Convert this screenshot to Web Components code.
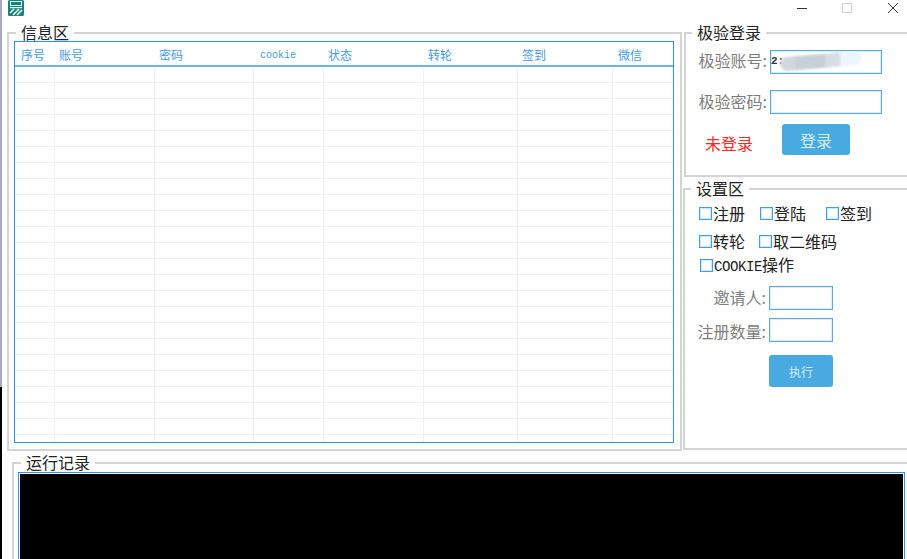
<!DOCTYPE html>
<html>
<head>
<meta charset="utf-8">
<title>信息区</title>
<style>
  html, body { margin: 0; height: 100%; background: #fff; overflow: hidden; }
  body { font-family: "Noto Sans CJK SC", "Liberation Sans", sans-serif; }
</style>
</head>
<body>
<app-window></app-window>

<template id="group-tpl">
  <style>
    :host { display: block; box-sizing: border-box; }
    fieldset { box-sizing: border-box; height: 100%; margin: 0; padding: 0; border: 2px solid #d4d4d4; min-width: 0; }
    legend { margin-left: var(--legend-left, 8px); padding: 0 5px 2px; font-size: 16px; line-height: 16px; color: #222; }
  </style>
  <fieldset><legend><slot name="title"></slot></legend><slot></slot></fieldset>
</template>

<script>
const MONO = '"Liberation Mono", "Noto Sans CJK SC", monospace';

class GroupBox extends HTMLElement {
  connectedCallback() {
    const root = this.attachShadow({ mode: 'open' });
    root.appendChild(document.getElementById('group-tpl').content.cloneNode(true));
  }
}

class TitleBar extends HTMLElement {
  connectedCallback() {
    this.attachShadow({ mode: 'open' }).innerHTML = `
      <style>
        :host { display: flex; height: 20px; align-items: flex-start; padding-left: 6px; }
        .logo { width: 16px; height: 16px; flex: none; }
        .btns { margin-left: auto; margin-right: -9px; display: flex; }
        .btn { height: 16px; display: flex; align-items: center; justify-content: center; }
        svg { display: block; }
      </style>
      <svg class="logo" viewBox="0 0 16 16">
        <rect width="16" height="16" rx="1.5" fill="#13857c"/>
        <rect x="2.5" y="1.5" width="11" height="4" fill="none" stroke="#dff2ef"/>
        <rect x="2" y="7" width="12" height="1.2" fill="#fff"/>
        <path d="M2 13 L6 9 M5 15 L11 9 M9 15 L14 10" stroke="#fff" stroke-width="1.5" fill="none"/>
      </svg>
      <div class="btns">
        <div class="btn" style="width:44px"><svg width="12" height="12"><path d="M1 6.5H11" stroke="#333"/></svg></div>
        <div class="btn" style="width:46px"><svg width="12" height="12"><rect x="1.5" y="1.5" width="9" height="9" fill="none" stroke="#d0d0d0"/></svg></div>
        <div class="btn" style="width:46px"><svg width="12" height="12"><path d="M1 1L11 11M11 1L1 11" stroke="#333" fill="none"/></svg></div>
      </div>`;
  }
}

class DataGrid extends HTMLElement {
  connectedCallback() {
    // label, column width, left padding of the heading
    const cols = [
      ['序号', 40, 6], ['账号', 100, 4], ['密码', 99, 4], ['cookie', 70, 6],
      ['状态', 100, 4], ['转轮', 94, 4], ['签到', 95, 4], ['微信', 60, 5]
    ];
    const tpl = cols.map(c => c[1] + 'px').join(' ');
    const head = cols.map(c => `<div class="${c[0] === 'cookie' ? 'mono' : ''}" style="padding-left:${c[2]}px">${c[0]}</div>`).join('');
    const row = cols.map(() => '<i></i>').join('');
    this.attachShadow({ mode: 'open' }).innerHTML = `
      <style>
        :host { display: block; box-sizing: border-box; border: 1px solid #2a93ea; margin: -1px 6px 0 5px; height: 402px; overflow: hidden; }
        .head, .row { display: grid; grid-template-columns: ${tpl}; width: 658px; }
        .head { box-sizing: border-box; height: 25px; border-bottom: 2px solid #74b3ea; color: #3f9be6; font-size: 12px; }
        .head div { white-space: nowrap; line-height: 25px; }
        .head div.mono { font-family: ${MONO}; font-size: 10px; line-height: 27px; }
        .rows { height: 375px; overflow: hidden; }
        .row { height: 16px; box-sizing: border-box; border-bottom: 1px solid #f1f1f1; }
        .row i { border-right: 1px solid #f1f1f1; }
        .row i:last-child { border-right: 0; }
      </style>
      <div class="head">${head}</div>
      <div class="rows">${Array(24).fill(`<div class="row">${row}</div>`).join('')}</div>`;
  }
}

class TextField extends HTMLElement {
  connectedCallback() {
    this.attachShadow({ mode: 'open' }).innerHTML = `
      <style>
        :host { display: flex; align-items: center; font-size: 16px; color: #7d7d7d; }
        .label { box-sizing: border-box; width: var(--label-w, 73px); padding-right: 3px; text-align: right; white-space: nowrap; line-height: 20px; margin-top: var(--label-shift, -3px); }
        .box { box-sizing: border-box; position: relative; overflow: hidden; width: var(--box-w, 112px); height: 24px; border: 1px solid #5aa7e4; box-shadow: inset 0 0 0 1px rgba(120,190,240,.25); background: #fff; }
        .val { position: absolute; left: 0; top: 4px; font: bold 11px ${MONO}; color: #333; }
        .blur { position: absolute; left: 9px; top: 3px; height: 14px; width: 82px; border-radius: 7px; transform: rotate(-5deg); filter: blur(1px);
          background: linear-gradient(90deg, #d2d7dc 0 18%, #c8d0d7 18% 55%, #d6dde5 55% 73%, #ecf4fc 73% 100%); }
      </style>
      <span class="label">${this.getAttribute('label')}</span>
      <div class="box">${this.hasAttribute('value') ? `<span class="val">${this.getAttribute('value')}</span><span class="blur"></span>` : ''}</div>`;
  }
}

class FlatButton extends HTMLElement {
  connectedCallback() {
    this.attachShadow({ mode: 'open' }).innerHTML = `
      <style>
        :host { display: flex; align-items: center; justify-content: center; box-sizing: border-box; background: #49aae2; color: #d6ecf9; border-radius: 3px; }
      </style>
      <slot></slot>`;
  }
}

class CheckItem extends HTMLElement {
  connectedCallback() {
    this.attachShadow({ mode: 'open' }).innerHTML = `
      <style>
        :host { display: inline-flex; align-items: center; font-size: 16px; color: #222; white-space: nowrap; line-height: 20px; }
        .box { box-sizing: border-box; width: 13px; height: 13px; border: 1px solid #3d9eea; box-shadow: inset 0 0 0 1px rgba(120,190,240,.35); margin-right: 1px; flex: none; background: #fff; }
      </style>
      <span class="box"></span><slot></slot>`;
  }
}

class LoginPanel extends HTMLElement {
  connectedCallback() {
    this.attachShadow({ mode: 'open' }).innerHTML = `
      <style>
        :host { display: block; }
        group-box { height: 153px; --legend-left: 6px; }
        .body { padding-top: 8px; display: flex; flex-direction: column; }
        text-field { --label-w: 84px; --box-w: 112px; --label-shift: -5px; }
        text-field + text-field { margin-top: 16px; --label-shift: -3px; }
        .foot { display: flex; align-items: flex-start; margin-top: 10px; }
        .status { margin: 8px 0 0 19px; width: 77px; color: #fb2a2a; font-size: 16px; line-height: 22px; }
        flat-button { width: 68px; height: 31px; font-size: 16px; }
      </style>
      <group-box>
        <span slot="title">极验登录</span>
        <div class="body">
          <text-field label="极验账号:" value="2:"></text-field>
          <text-field label="极验密码:"></text-field>
          <div class="foot"><span class="status">未登录</span><flat-button>登录</flat-button></div>
        </div>
      </group-box>`;
  }
}

class SettingsPanel extends HTMLElement {
  connectedCallback() {
    this.attachShadow({ mode: 'open' }).innerHTML = `
      <style>
        :host { display: block; margin-left: -1px; }
        group-box { height: 270px; --legend-left: 6px; }
        .body { padding: 5px 0 0 14px; }
        .line { display: flex; height: 20px; }
        .line.second { margin-top: 8px; }
        .line.third { margin-top: 4px; padding-left: 1px; }
        .mono { font-family: ${MONO}; font-size: 14px; letter-spacing: -.4px; }
        text-field { --box-w: 64px; --label-w: 72px; margin: 11px 0 0 -2px; }
        text-field + text-field { margin-top: 8px; --label-shift: 1px; }
        .run { width: 64px; height: 32px; margin: 13px 0 0 70px; font-size: 12px; }
      </style>
      <group-box>
        <span slot="title">设置区</span>
        <div class="body">
          <div class="line"><check-item style="width:61px">注册</check-item><check-item style="width:66px">登陆</check-item><check-item>签到</check-item></div>
          <div class="line second"><check-item style="width:60px">转轮</check-item><check-item>取二维码</check-item></div>
          <div class="line third"><check-item><span><span class="mono">COOKIE</span>操作</span></check-item></div>
          <text-field label="邀请人:"></text-field>
          <text-field label="注册数量:"></text-field>
          <flat-button class="run">执行</flat-button>
        </div>
      </group-box>`;
  }
}

class AppWindow extends HTMLElement {
  connectedCallback() {
    this.attachShadow({ mode: 'open' }).innerHTML = `
      <style>
        :host { display: block; height: 559px; overflow: hidden; box-sizing: border-box; padding-left: 2px;
          background: linear-gradient(#a9a9c4 0 387px, #000 387px) left top / 2px 100% no-repeat, #fff; }
        .top { display: grid; grid-template-columns: 675px 1fr; column-gap: 2px; padding: 4px 0 0 5px; }
        .info { height: 427px; --legend-left: 7px; }
        .side { display: flex; flex-direction: column; gap: 3px; margin-right: -40px; min-width: 0; }
        .log { margin: 3px -30px 0 10px; height: 140px; --legend-left: 7px; }
        .term { box-sizing: border-box; height: 120px; margin-left: 4px; width: 887px; border: 1px solid #2a93ea; padding: 1px; background: #fff; }
        .term div { background: #000; height: 100%; }
      </style>
      <title-bar></title-bar>
      <div class="top">
        <group-box class="info"><span slot="title">信息区</span><data-grid></data-grid></group-box>
        <div class="side"><login-panel></login-panel><settings-panel></settings-panel></div>
      </div>
      <group-box class="log"><span slot="title">运行记录</span><div class="term"><div></div></div></group-box>`;
  }
}

customElements.define('group-box', GroupBox);
customElements.define('title-bar', TitleBar);
customElements.define('data-grid', DataGrid);
customElements.define('text-field', TextField);
customElements.define('flat-button', FlatButton);
customElements.define('check-item', CheckItem);
customElements.define('login-panel', LoginPanel);
customElements.define('settings-panel', SettingsPanel);
customElements.define('app-window', AppWindow);
</script>
</body>
</html>
